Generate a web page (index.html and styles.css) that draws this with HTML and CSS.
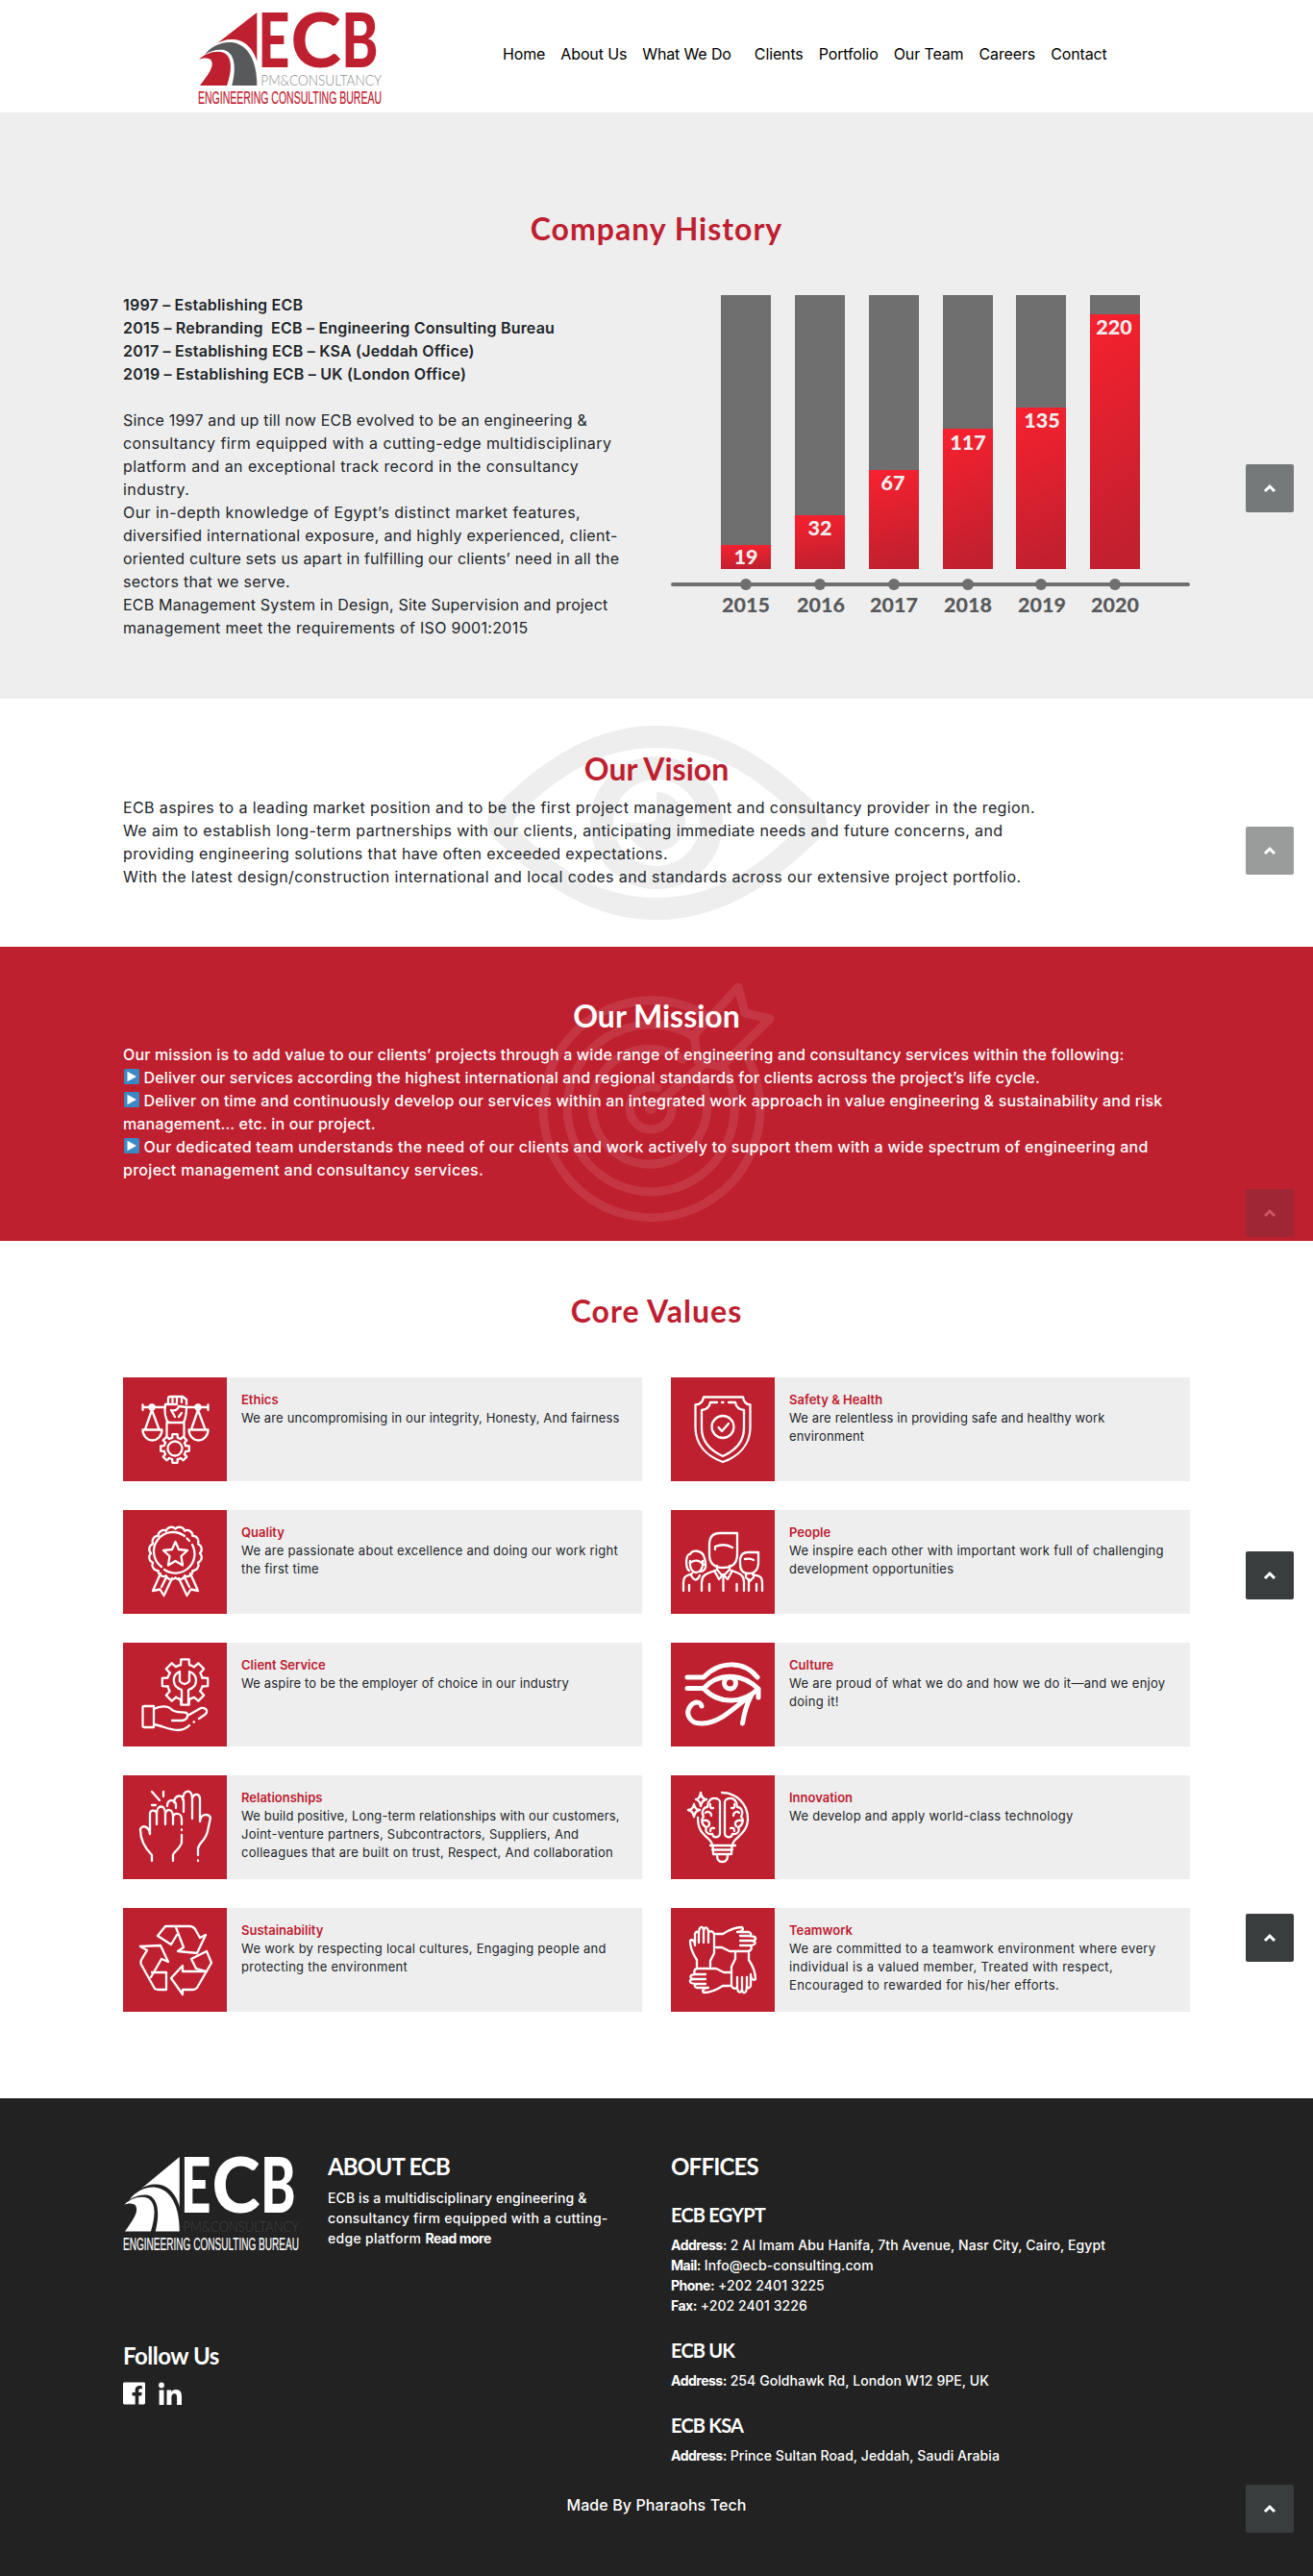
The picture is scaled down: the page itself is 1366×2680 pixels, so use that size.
FILE: index.html
```html
<!DOCTYPE html>
<html lang="en">
<head>
<meta charset="utf-8">
<title>ECB – Engineering Consulting Bureau</title>
<link rel="stylesheet" href="styles.css">
</head>
<body>
<svg class="defs" aria-hidden="true">
  <symbol id="logo" class="logo-symbol" viewBox="0 0 190 96" preserveAspectRatio="none">
    <path class="logo-main" d="M61 1V52C57 37 46 28 34 29 29 29 24 31 20 33Z"/>
    <path class="logo-road" d="M7 45C12 37 24 31 35 32 51 34 61 50 61 77H35C40 58 38 43 27 40 20 39 12 41 7 45Z"/>
    <path class="logo-main" d="M1 50C8 43 19 40 27 43 36 48 35 62 30 77H2C11 65 18 56 13 50 10 48 5 48 1 50Z"/>
    <text class="logo-letter" x="62" y="57.500" textLength="33" lengthAdjust="spacingAndGlyphs">E</text>
    <text class="logo-letter" x="96" y="57.500" textLength="52" lengthAdjust="spacingAndGlyphs">C</text>
    <text class="logo-letter" x="148.500" y="57.500" textLength="38" lengthAdjust="spacingAndGlyphs">B</text>
    <text class="logo-sub" x="65" y="77.500" textLength="125" lengthAdjust="spacingAndGlyphs">PM&amp;CONSULTANCY</text>
    <text class="logo-name" x="0" y="96" textLength="190" lengthAdjust="spacingAndGlyphs">ENGINEERING CONSULTING BUREAU</text>
  </symbol>
  <path id="tooth" d="M11.200-2.800L14.800-2.600V2.600L11.200 2.800A11.500 11.500 0 0 1 9.860 5.920" vector-effect="non-scaling-stroke"/>
  <g id="gear">
    <use href="#tooth"/><use href="#tooth" transform="rotate(45)"/><use href="#tooth" transform="rotate(90)"/><use href="#tooth" transform="rotate(135)"/>
    <use href="#tooth" transform="rotate(180)"/><use href="#tooth" transform="rotate(225)"/><use href="#tooth" transform="rotate(270)"/><use href="#tooth" transform="rotate(315)"/>
  </g>
  <path id="bump" d="M25.500 0A6 6 0 0 1 23.560 9.760"/>
  <g id="bumps"><use href="#bump"/><use href="#bump" transform="rotate(22.500)"/><use href="#bump" transform="rotate(45)"/><use href="#bump" transform="rotate(67.500)"/></g>
  <g id="ribbon"><path d="M39 66L31 84 38.500 82.500 42.500 89 51 71M45 70L40 80"/></g>
  <g id="pan"><path d="M30 34L23 54M30 34L37.500 54M20.500 54.500H40.500A10 11 0 0 1 20.500 54.500Z"/><circle cx="30" cy="31" r="2.500"/></g>
  <g id="brain"><path d="M51 28V60C51 65 44 66 43 61 38 62 35 58 37 54 32 52 31 46 34 43 31 38 34 33 38 33 38 27 42 23 46 24 49 24 51 26 51 28ZM41 30C40 33 42 35 44 34M36 39C38 37 42 38 42 42M34 47C38 46 42 49 39 53M41 58C41 55 43 54 45 55"/></g>
  <g id="team-hand"><path d="M27 61V54C23 48 20 41 20 34 22 32 25 34 25 39V27C26 24 29 24 29 27 29 18 34 18 34 24 35 18 39 20 39 26 40 23 45 24 45 28V47L41 55V61M29 27V36M34 24V36M39 26V36"/></g>
  <g id="play"><rect width="16" height="16" rx="1.500" fill="#3b88c3"/><path d="M3.500 2.800L13 8 3.500 13.200Z" fill="#fff"/></g>
  <path id="chevron" d="M20 28L25 23 30 28"/>
</svg>

<header class="header">
  <div class="container header-row">
    <svg class="header-logo" role="img" aria-label="ECB"><use href="#logo"/></svg>
    <nav class="nav">
      <a>Home</a><a>About Us</a><a>What We Do</a><a class="nav-split">Clients</a><a>Portfolio</a><a>Our Team</a><a>Careers</a><a>Contact</a>
    </nav>
  </div>
</header>

<main>
  <section class="history">
    <div class="container">
      <h2 class="title wide">Company History</h2>
      <div class="columns">
        <div class="history-text">
          <p class="milestones">1997 – Establishing ECB<br>2015 – Rebranding&nbsp; ECB – Engineering Consulting Bureau<br>2017 – Establishing ECB – KSA (Jeddah Office)<br>2019 – Establishing ECB – UK (London Office)</p>
          <p><span class="snug">Since 1997 and up till now ECB evolved to be an engineering &amp;</span><br><span class="loose">consultancy firm equipped with a cutting-edge multidisciplinary<br>platform and an exceptional track record in the consultancy<br>industry.<br>Our in-depth knowledge of Egypt’s distinct market features,</span><br>diversified international exposure, and highly experienced, client-<br><span class="snug">oriented culture sets us apart in fulfilling our clients’ need in all the</span><br>sectors that we serve.<br><span class="snug">ECB Management System in Design, Site Supervision and project</span><br>management meet the requirements of ISO 9001:2015</p>
        </div>
        <svg class="chart" viewBox="0 0 540 340">
          <defs><linearGradient id="bar" x1="0" y1="0" x2="0.150" y2="1"><stop offset="0" stop-color="#f8212f"/><stop offset="1" stop-color="#c2202f"/></linearGradient></defs>
          <g fill="#6f6f6f"><path d="M52 2h52v285H52zM129 2h52v285h-52zM206 2h52v285h-52zM283 2h52v285h-52zM359 2h52v285h-52zM436 2h52v285h-52z"/></g>
          <g fill="url(#bar)">
            <rect x="52" y="262" width="52" height="25"/><rect x="129" y="231" width="52" height="56"/><rect x="206" y="184" width="52" height="103"/>
            <rect x="283" y="141" width="52" height="146"/><rect x="359" y="119" width="52" height="168"/><rect x="436" y="22" width="52" height="265"/>
          </g>
          <g class="chart-value">
            <text x="78" y="281.500">19</text><text x="155" y="251.500">32</text><text x="231" y="204.500">67</text><text x="309" y="162.500">117</text><text x="386" y="139.500">135</text><text x="461" y="43">220</text>
          </g>
          <path class="chart-axis" d="M2 303H538"/>
          <g fill="#6f6f6f"><circle cx="78" cy="303" r="6"/><circle cx="155" cy="303" r="6"/><circle cx="232" cy="303" r="6"/><circle cx="309" cy="303" r="6"/><circle cx="385" cy="303" r="6"/><circle cx="462" cy="303" r="6"/></g>
          <g class="chart-year">
            <text x="78" y="332">2015</text><text x="156" y="332">2016</text><text x="232" y="332">2017</text><text x="309" y="332">2018</text><text x="386" y="332">2019</text><text x="462" y="332">2020</text>
          </g>
        </svg>
      </div>
    </div>
  </section>

  <section class="vision">
    <svg class="vision-mark" viewBox="0 0 353 202">
      <path fill="#eee" fill-rule="evenodd" d="M176 0C250 0 305 45 349 88Q357 101 349 114C305 157 250 202 176 202S48 157 4 114Q-4 101 4 88C48 45 102 0 176 0ZM176 23C112 23 68 58 29 96Q26 101 29 106C68 144 112 179 176 179S285 144 324 106Q327 101 324 96C285 58 240 23 176 23Z"/>
      <circle cx="176" cy="101" r="57" fill="none" stroke="#eee" stroke-width="24"/>
      <path fill="#eee" d="M176 69A31 31 0 1 1 144 101H168Q176 101 176 93Z"/>
    </svg>
    <div class="container">
      <h2 class="title">Our Vision</h2>
      <p class="airy">ECB aspires to a leading market position and to be the first project management and consultancy provider in the region.<br>We aim to establish long-term partnerships with our clients, anticipating immediate needs and future concerns, and<br>providing engineering solutions that have often exceeded expectations.<br>With the latest design/construction international and local codes and standards across our extensive project portfolio.</p>
    </div>
  </section>

  <section class="mission">
    <svg class="mission-mark" viewBox="0 0 252 252">
      <g fill="none" stroke="#c53644" stroke-linejoin="round" stroke-linecap="round" stroke-width="9">
        <path d="M190 45A113 113 0 1 0 214 71"/>
        <path d="M165 59A87 87 0 1 0 193 87"/>
        <path d="M152 82A60 60 0 1 0 167 97"/>
        <path d="M126 112A22 22 0 1 0 140 126"/>
        <path d="M210 7L164 57 168 84 192 90 243 40 217 34ZM174 87L121 132"/>
      </g>
      <circle cx="119" cy="133" r="6" fill="#c53644"/>
    </svg>
    <div class="container">
      <h2 class="title">Our Mission</h2>
      <p>Our mission is to add value to our clients’ projects through a wide range of engineering and consultancy services within the following:<br><svg class="play" viewBox="0 0 16 16"><use href="#play"/></svg> Deliver our services according the highest international and regional standards for clients across the project’s life cycle.<br><svg class="play" viewBox="0 0 16 16"><use href="#play"/></svg> <span class="snug">Deliver on time and continuously develop our services within an integrated work approach in value engineering &amp; sustainability and risk</span><br>management… etc. in our project.<br><svg class="play" viewBox="0 0 16 16"><use href="#play"/></svg> <span class="mid">Our dedicated team understands the need of our clients and work actively to support them with a wide spectrum of engineering and<br>project management and consultancy services.</span></p>
    </div>
  </section>

  <section class="values">
    <div class="container">
      <h2 class="title wide">Core Values</h2>
      <div class="cards">
        <article class="card">
          <svg class="icon" viewBox="0 0 108 108"><path d="M20.500 28.500V34M20.500 31H43M66 31H88.500M88.500 28.500V34"/><use href="#pan"/><use href="#pan" x="48"/><path d="M47 28V22Q47 20 49.500 20H62L66 23V28M51.500 20V26M56 20V26M61 20V26M44 28H56M44 28C43 35 43 41 47 47H63C66 41 66 36 66 31L58 30C57 34 54 35 50 34L54 41M58 41L61 37M45.500 47V62M63.500 47V62"/><use href="#gear" transform="translate(54 74)"/><circle cx="54" cy="74" r="7.500"/></svg>
          <div class="card-body"><h3>Ethics</h3><p class="tight">We are uncompromising in our integrity, Honesty, And fairness</p></div>
        </article>
        <article class="card">
          <svg class="icon" viewBox="0 0 108 108"><path d="M34 20.500H75Q76 28 82.500 28.500V53C82 70 71 82 54 88 37 82 26 70 25.500 53V28.500Q33 28 34 20.500ZM48 26H41C40 31 37 33.500 32 34V53C32 66 41 76 54 82 67 76 76 66 76 53V34C71 33.500 68 31 67 26H60M53 26H54.500"/><circle cx="54" cy="51.500" r="11.500"/><path d="M49.500 52L53 56 60 48"/></svg>
          <div class="card-body"><h3>Safety &amp; Health</h3><p class="tight">We are relentless in providing safe and healthy work<br>environment</p></div>
        </article>
        <article class="card">
          <svg class="icon" viewBox="0 0 108 108"><g transform="translate(54.500 45)"><use href="#bumps"/><use href="#bumps" transform="rotate(90)"/><use href="#bumps" transform="rotate(180)"/><use href="#bumps" transform="rotate(270)"/></g><path d="M64 27A20 20 0 0 0 40 59M43 62A20 20 0 0 0 72 36M66.500 29.500L69 32M54.500 33L58 41 67 42 60.500 48 62 57.500 54.500 53 47 57.500 48.500 48 42 42 51 41Z"/><use href="#ribbon"/><use href="#ribbon" transform="matrix(-1 0 0 1 109 0)"/></svg>
          <div class="card-body"><h3>Quality</h3><p>We are passionate about excellence and doing our work right<br>the first time</p></div>
        </article>
        <article class="card">
          <svg class="icon" viewBox="0 0 108 108"><path d="M40 46V36Q40 24 51 24H69V46Q69 60 54.500 60T40 46M46 41V38Q56 34 64 39M48 58V62L54 69 61 62V58M45 63L50 72 54.500 67 59 72 64 63M46 63C38 66 32 67 32 75V84M63 63C71 66 76 67 76 75V84M54.500 67V84M40 77V84M68.500 77V84M19 63C15 61 15 45 20 46 22 41 33 41 35 50 37 58 37 63 31 64M20 55C23 53 28 50 34 57M20 53C19 61 23 65 26 65S34 62 33 53M21 68Q26 77 30 68M22 66C16 69 13 68 13 76V84M19 78V84M72 56V51Q73 44 80 44H91V56Q90 66 81 66T72 56M77 51Q82 50 86 52M78 66V70L82 74 86 70V66M85 67C91 69 95 68 95 76V84M89 77V84M81 72V84"/></svg>
          <div class="card-body"><h3>People</h3><p>We inspire each other with important work full of challenging<br>development opportunities</p></div>
        </article>
        <article class="card">
          <svg class="icon" viewBox="0 0 108 108"><use href="#gear" transform="translate(64.500 41) scale(1.600)"/><path d="M61 64V49C51 46 50 34 59 30V40Q64 46 69 40V30C79 34 78 46 68 49V64M20.500 67Q20.500 66 22 66H32V88H22Q20.500 88 20.500 87ZM32 69C38 66 46 65 50 69 53 73 61 72 66 73 69 76 66 81 61 81H51M67 76L81 68C87 67 89 72 85 75L79 79M32 85C40 86 48 91 57 91 63 91 66 89 69 86M73.500 82.500H74"/></svg>
          <div class="card-body"><h3>Client Service</h3><p class="tight">We aspire to be the employer of choice in our industry</p></div>
        </article>
        <article class="card">
          <svg class="icon bold" viewBox="0 0 108 108"><path d="M17 36H34C50 19 76 18 90 36M17 47.500H34C49 31 73 31 91 48 74 64 49 64 34 47.500M91 48V57M32 66C31 61 25 61 21 65 14 73 19 85 33 84 52 83 65 68 84 54M84 54C78 65 76 74 74.500 84"/><circle cx="61.500" cy="42" r="6"/></svg>
          <div class="card-body"><h3>Culture</h3><p>We are proud of what we do and how we do it—and we enjoy<br>doing it!</p></div>
        </article>
        <article class="card">
          <svg class="icon" viewBox="0 0 108 108"><path d="M30 89V83C21 74 18 65 18 56 20 51 27 53 28 61V40C28 35 35 36 35 40V51M35 40C35 30 44 30 44 40V51M44 40C46 33 52 36 52 43V51M52 43C54 38 61 39 61 46V51M61 56.500V57M61 62V70C59 77 52 80 52 83V89M46 32C46 24 54 25 55 30V34M53 28C54 20 62 19 63 27V38M62 25C63 14 72 14 72 24V45M72 24C74 18 80 19 80 25V48C81 39 89 40 91 44L88 58C86 68 79 70 78 76V83M78 88.500V89M30 17L38 26M42 17V22M30 31H34"/></svg>
          <div class="card-body"><h3>Relationships</h3><p><span class="tight">We build positive, Long-term relationships with our customers,</span><br>Joint-venture partners, Subcontractors, Suppliers, And<br>colleagues that are built on trust, Respect, And collaboration</p></div>
        </article>
        <article class="card">
          <svg class="icon" viewBox="0 0 108 108"><use href="#brain"/><use href="#brain" transform="matrix(-1 0 0 1 107 0)"/><path d="M53 18C68 18 80 30 80 45 80 57 72 62 67 67 64 70 63 73 63 82H44C44 73 43 70 40 67 32 60 28 56 28 44M41 73H67M43 77.500H64M48 83Q48 90 53.500 90T59 83M31 18Q32 25 37 25 32 26 31 32 30 26 26 25 30 25 31 18ZM24 30Q25 36 30 36 25 37 24 43 23 37 18 36 23 36 24 30Z"/></svg>
          <div class="card-body"><h3>Innovation</h3><p>We develop and apply world-class technology</p></div>
        </article>
        <article class="card">
          <svg class="icon" viewBox="0 0 108 108"><path d="M36 29L44 19H69Q73 19 75 22L80 31 86 28 77 47 57 45 63 41 55 20M36 29L50 38 56 28M18 40L39 39 47 56 40 53 29 72M18 40L25 44 19 54Q18 57 19 59L33 84Q35 85 37 85H45V67H30M62 66H87M50 73L62 60V66M50 73L62 90V85H73Q75 85 77 83L92 57 87 45 71 53 76 63 87 66"/></svg>
          <div class="card-body"><h3>Sustainability</h3><p>We work by respecting local cultures, Engaging people and<br>protecting the environment</p></div>
        </article>
        <article class="card">
          <svg class="icon" viewBox="0 0 108 108"><use href="#team-hand"/><use href="#team-hand" transform="rotate(90 54 54)"/><use href="#team-hand" transform="rotate(180 54 54)"/><use href="#team-hand" transform="rotate(270 54 54)"/></svg>
          <div class="card-body"><h3>Teamwork</h3><p class="loose">We are committed to a teamwork environment where every<br>individual is a valued member, Treated with respect,<br>Encouraged to rewarded for his/her efforts.</p></div>
        </article>
      </div>
    </div>
  </section>
</main>

<footer class="footer">
  <div class="container footer-row">
    <div class="footer-brand">
      <svg class="footer-logo" role="img" aria-label="ECB"><use href="#logo"/></svg>
      <h3>Follow Us</h3>
      <div class="social">
        <svg viewBox="0 0 24 24" width="23" height="24"><path fill="#fff" d="M1.500 0H22.500Q24 0 24 1.500V22.500Q24 24 22.500 24H17V14.700H20L20.500 11H17V8.700C17 7.600 17.400 7 18.900 7H20.700V3.800C20 3.700 19 3.600 18 3.600 15.100 3.600 13.200 5.300 13.200 8.300V11H10V14.700H13.200V24H1.500Q0 24 0 22.500V1.500Q0 0 1.500 0Z"/></svg>
        <svg viewBox="0 0 24 24" width="24" height="24"><g fill="#fff"><circle cx="3" cy="3.500" r="2.900"/><path d="M.600 8.500H5.500V24H.600ZM8.500 8.500H13.200V10.600C14.200 9 15.700 8.100 17.900 8.100 22.600 8.100 24 11 24 15.500V24H19.100V16.400C19.100 14.200 18.800 12.200 16.500 12.200S13.400 14 13.400 16.300V24H8.500Z"/></g></svg>
      </div>
    </div>
    <div class="footer-about">
      <h3>ABOUT ECB</h3>
      <p><span class="tight">ECB is a multidisciplinary engineering &amp;</span><br>consultancy firm equipped with a cutting-<br>edge platform <b>Read more</b></p>
    </div>
    <div class="footer-offices">
      <h3>OFFICES</h3>
      <h4>ECB EGYPT</h4>
      <p><b>Address:</b> 2 Al Imam Abu Hanifa, 7th Avenue, Nasr City, Cairo, Egypt<br><b>Mail:</b> Info@ecb-consulting.com<br><b>Phone:</b> +202 2401 3225<br><b>Fax:</b> +202 2401 3226</p>
      <h4>ECB UK</h4>
      <p><b>Address:</b> 254 Goldhawk Rd, London W12 9PE, UK</p>
      <h4>ECB KSA</h4>
      <p><b>Address:</b> Prince Sultan Road, Jeddah, Saudi Arabia</p>
    </div>
  </div>
  <p class="credit">Made By Pharaohs Tech</p>
</footer>

<svg class="to-top to-top-1" viewBox="0 0 50 50"><use href="#chevron"/></svg>
<svg class="to-top to-top-2" viewBox="0 0 50 50"><use href="#chevron"/></svg>
<svg class="to-top to-top-3" viewBox="0 0 50 50"><use href="#chevron"/></svg>
<svg class="to-top to-top-4" viewBox="0 0 50 50"><use href="#chevron"/></svg>
<svg class="to-top to-top-5" viewBox="0 0 50 50"><use href="#chevron"/></svg>
<svg class="to-top to-top-6" viewBox="0 0 50 50"><use href="#chevron"/></svg>
</body>
</html>
```
FILE: styles.css
```css
* { box-sizing: border-box; }
body {
  margin: 0;
  position: relative;
  background: #fff;
  color: #212529;
  font: 400 16px/24px Inter, "Open Sans", sans-serif;
  letter-spacing: .3px;
  white-space: nowrap;
}
h2, h3, h4, p { margin: 0; }
.defs { position: absolute; width: 0; height: 0; }
.container { width: 1110px; margin: 0 auto; position: relative; }
.tight { letter-spacing: .15px; }
.snug { letter-spacing: .2px; }
.mid { letter-spacing: .29px; }
.loose { letter-spacing: .43px; }
.airy { letter-spacing: .39px; }

/* Header */
.header { height: 117px; background: #fff; color: #000; }
.header-row { display: flex; align-items: flex-start; padding: 12px 0 0 78px; }
.header-logo { width: 191px; height: 96px; overflow: visible; --main: #be202f; --road: #58595b; --sub: #8a8b8d; }
.nav { display: flex; gap: 16px; margin: 32px 0 0 126px; letter-spacing: -.13px; }
.nav-split { margin-left: 8px; }
.logo-symbol { overflow: visible; }
.logo-main { fill: var(--main); }
.logo-road { fill: var(--road); }
.logo-letter { font: 900 78px Lato, sans-serif; fill: var(--main); letter-spacing: 0; }
.logo-sub { font: 300 16px Lato, sans-serif; fill: var(--sub); letter-spacing: 0; }
.logo-name { font: 400 17.500px "Liberation Sans", sans-serif; fill: var(--main); stroke: var(--main); stroke-width: .2; letter-spacing: 0; }

/* Section titles */
.title {
  font: 700 32px/38px Lato, sans-serif;
  letter-spacing: 0;
  color: #be202f;
  text-align: center;
}
.title.wide { letter-spacing: 1px; }

/* History */
.history { height: 610px; padding-top: 102px; background: #eee; }
.columns { display: grid; grid-template-columns: 540px 540px; gap: 30px; margin-top: 48px; }
.milestones { font-weight: 600; letter-spacing: .2px; margin-bottom: 24px; }
.chart { display: block; width: 540px; height: 340px; }
.chart text { font: 900 21.500px Lato, sans-serif; letter-spacing: 0; text-anchor: middle; }
.chart-value { fill: #eee; }
.chart-year { fill: #58595b; }
.chart-axis { stroke: #6f6f6f; stroke-width: 4; stroke-linecap: round; }

/* Vision and mission */
.vision { position: relative; height: 258px; padding-top: 54px; }
.vision p, .mission p { margin-top: 9px; }
.vision-mark { position: absolute; left: 507px; top: 28px; width: 353px; height: 202px; }
.mission { position: relative; height: 306px; padding-top: 53px; background: #be202f; color: #fff; font-weight: 500; letter-spacing: .16px; }
.mission .title { color: #fff; }
.mission-mark { position: absolute; left: 558px; top: 35px; width: 252px; height: 252px; }
.play { width: 16px; height: 16px; vertical-align: -1px; margin-left: 1px; }

/* Core values */
.values { height: 892px; padding-top: 54px; }
.cards { display: grid; grid-template-columns: 540px 540px; grid-auto-rows: 108px; gap: 30px; margin-top: 50px; }
.card { display: flex; background: #eee; font-size: 13px; line-height: 19px; }
.icon {
  width: 108px; height: 108px; background: #be202f;
  fill: none; stroke: #fff; stroke-width: 2.300; stroke-linecap: round; stroke-linejoin: round;
}
.icon.bold { stroke-width: 5; }
.card-body { padding: 14px 0 0 15px; letter-spacing: .27px; }
.card .loose { letter-spacing: .35px; }
.card h3 { font-size: 13px; line-height: 19px; font-weight: 600; letter-spacing: 0; color: #be202f; }

/* Footer */
.footer { height: 497px; padding-top: 56px; background: #222; color: #fff; font-weight: 500; }
.footer-row { display: grid; grid-template-columns: 213px 357px 540px; height: 326px; font-size: 14px; line-height: 21px; }
.footer h3 { font: 700 24px/29px Lato, sans-serif; letter-spacing: -.8px; }
.footer h4 { font: 700 20px/24px Lato, sans-serif; letter-spacing: -.8px; margin: 24px 0 9px; }
.footer b { font-weight: 700; letter-spacing: -.5px; }
.footer-logo { display: block; width: 183px; height: 98px; margin-top: 4px; overflow: visible; --main: #fff; --road: #fff; --sub: #414141; }
.footer .footer-brand h3 { margin-top: 95px; letter-spacing: -.5px; }
.social { display: flex; gap: 14px; margin-top: 13px; }
.footer-about p { margin-top: 8px; }
.footer-about .tight { letter-spacing: .12px; }
.footer-offices p { letter-spacing: .08px; }
.credit { text-align: center; margin-top: 29px; letter-spacing: .1px; }

/* Back-to-top buttons */
.to-top {
  position: absolute; left: 1296px; width: 50px; height: 50px; border-radius: 2px;
  background: #3a3d3e; fill: none; stroke: #fff; stroke-width: 3;
}
.to-top-1 { top: 483px; background: #757979; }
.to-top-2 { top: 860px; background: #9a9c9b; }
.to-top-3 { top: 1237px; background: #9f2735; stroke: #cd5763; }
.to-top-4 { top: 1614px; }
.to-top-5 { top: 1991px; }
.to-top-6 { top: 2585px; }
```
